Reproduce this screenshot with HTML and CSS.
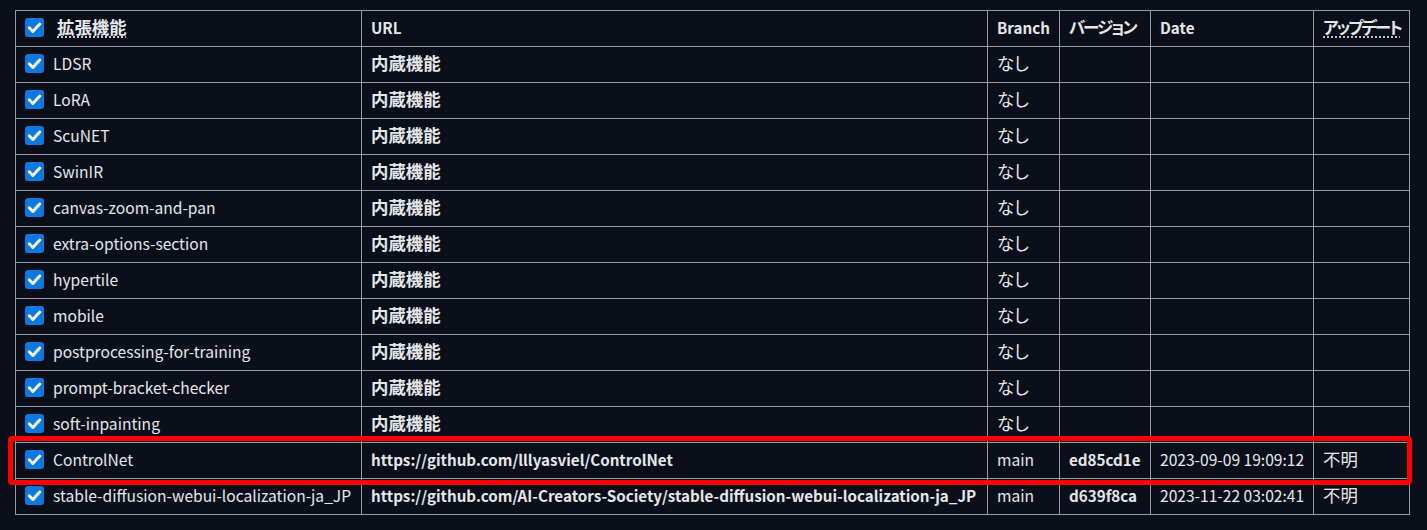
FILE: index.html
```html
<!DOCTYPE html>
<html lang="ja">
<head>
<meta charset="utf-8">
<link rel="stylesheet" href="styles.css">
</head>
<body>
<div class="wrap">
<table class="ext">
<colgroup>
<col class="c1"><col class="c2"><col class="c3"><col class="c4"><col class="c5"><col class="c6">
</colgroup>
<thead>
<tr>
<th><label class="chk"><span class="box"></span><abbr class="ja big">拡張機能</abbr></label></th>
<th>URL</th>
<th>Branch</th>
<th><span class="ja kata">バージョン</span></th>
<th>Date</th>
<th><abbr class="ja kata">アップデート</abbr></th>
</tr>
</thead>
<tbody>
<tr><td><label class="chk"><span class="box"></span>LDSR</label></td><td class="b ja">内蔵機能</td><td class="ja">なし</td><td></td><td></td><td></td></tr>
<tr><td><label class="chk"><span class="box"></span>LoRA</label></td><td class="b ja">内蔵機能</td><td class="ja">なし</td><td></td><td></td><td></td></tr>
<tr><td><label class="chk"><span class="box"></span>ScuNET</label></td><td class="b ja">内蔵機能</td><td class="ja">なし</td><td></td><td></td><td></td></tr>
<tr><td><label class="chk"><span class="box"></span>SwinIR</label></td><td class="b ja">内蔵機能</td><td class="ja">なし</td><td></td><td></td><td></td></tr>
<tr><td><label class="chk"><span class="box"></span>canvas-zoom-and-pan</label></td><td class="b ja">内蔵機能</td><td class="ja">なし</td><td></td><td></td><td></td></tr>
<tr><td><label class="chk"><span class="box"></span>extra-options-section</label></td><td class="b ja">内蔵機能</td><td class="ja">なし</td><td></td><td></td><td></td></tr>
<tr><td><label class="chk"><span class="box"></span>hypertile</label></td><td class="b ja">内蔵機能</td><td class="ja">なし</td><td></td><td></td><td></td></tr>
<tr><td><label class="chk"><span class="box"></span>mobile</label></td><td class="b ja">内蔵機能</td><td class="ja">なし</td><td></td><td></td><td></td></tr>
<tr><td><label class="chk"><span class="box"></span>postprocessing-for-training</label></td><td class="b ja">内蔵機能</td><td class="ja">なし</td><td></td><td></td><td></td></tr>
<tr><td><label class="chk"><span class="box"></span>prompt-bracket-checker</label></td><td class="b ja">内蔵機能</td><td class="ja">なし</td><td></td><td></td><td></td></tr>
<tr><td><label class="chk"><span class="box"></span>soft-inpainting</label></td><td class="b ja">内蔵機能</td><td class="ja">なし</td><td></td><td></td><td></td></tr>
<tr><td><label class="chk"><span class="box"></span>ControlNet</label></td><td class="b">https://github.com/lllyasviel/ControlNet</td><td>main</td><td class="b">ed85cd1e</td><td>2023-09-09 19:09:12</td><td class="ja">不明</td></tr>
<tr><td><label class="chk"><span class="box"></span>stable-diffusion-webui-localization-ja_JP</label></td><td class="b">https://github.com/AI-Creators-Society/stable-diffusion-webui-localization-ja_JP</td><td>main</td><td class="b">d639f8ca</td><td>2023-11-22 03:02:41</td><td class="ja">不明</td></tr>
</tbody>
</table>
<div class="highlight"></div>
</div>
</body>
</html>
```

FILE: styles.css
```css
html, body {
  margin: 0;
  padding: 0;
  background: #0b0f19;
}
body {
  font-family: "Noto Sans CJK JP", "Noto Sans", sans-serif;
  color: #e5e7eb;
  font-size: 15.6px;
}
.wrap {
  position: relative;
  padding: 10px 0 0 15px;
  height: 520px;
}
.ext {
  border-collapse: collapse;
  table-layout: fixed;
  width: 1395px;
}
.c1 { width: 346px; }
.c2 { width: 626px; }
.c3 { width: 72px; }
.c4 { width: 91px; }
.c5 { width: 163px; }
.c6 { width: 96px; }
.ext th, .ext td {
  border: 1px solid #9a9a9a;
  height: 36px;
  padding: 0 9px 3px;
  text-align: left;
  white-space: nowrap;
  box-sizing: border-box;
  line-height: 20px;
  vertical-align: middle;
}
.ext th {
  font-weight: 700;
  font-size: 15.2px;
}
.ext td.b { font-weight: 700; font-size: 15.2px; }
.ext td.ja, .ext .ja {
  font-size: 17.4px;
  font-feature-settings: "palt";
}
.ext .kata {
  font-size: 16.5px;
  letter-spacing: -2px;
}
abbr {
  text-decoration: underline dotted;
  text-underline-offset: 3px;
}
.big { margin-left: 4px; }
.chk {
  display: flex;
  align-items: center;
  gap: 9px;
}
.box {
  width: 19px;
  height: 19px;
  border-radius: 3px;
  background-color: #0c79de;
  flex: none;
  margin-top: 1px;
  background-image: url("data:image/svg+xml,%3Csvg xmlns='http://www.w3.org/2000/svg' viewBox='0 0 16 16'%3E%3Cpath d='M3.6 8.3l3 3 5.8-6.2' fill='none' stroke='white' stroke-width='2.4' stroke-linecap='round' stroke-linejoin='round'/%3E%3C/svg%3E");
  background-size: 100% 100%;
}
.highlight {
  position: absolute;
  left: 8px;
  top: 436px;
  width: 1404px;
  height: 49px;
  box-sizing: border-box;
  border: 5px solid #ff0000;
  border-radius: 4px;
}
```
